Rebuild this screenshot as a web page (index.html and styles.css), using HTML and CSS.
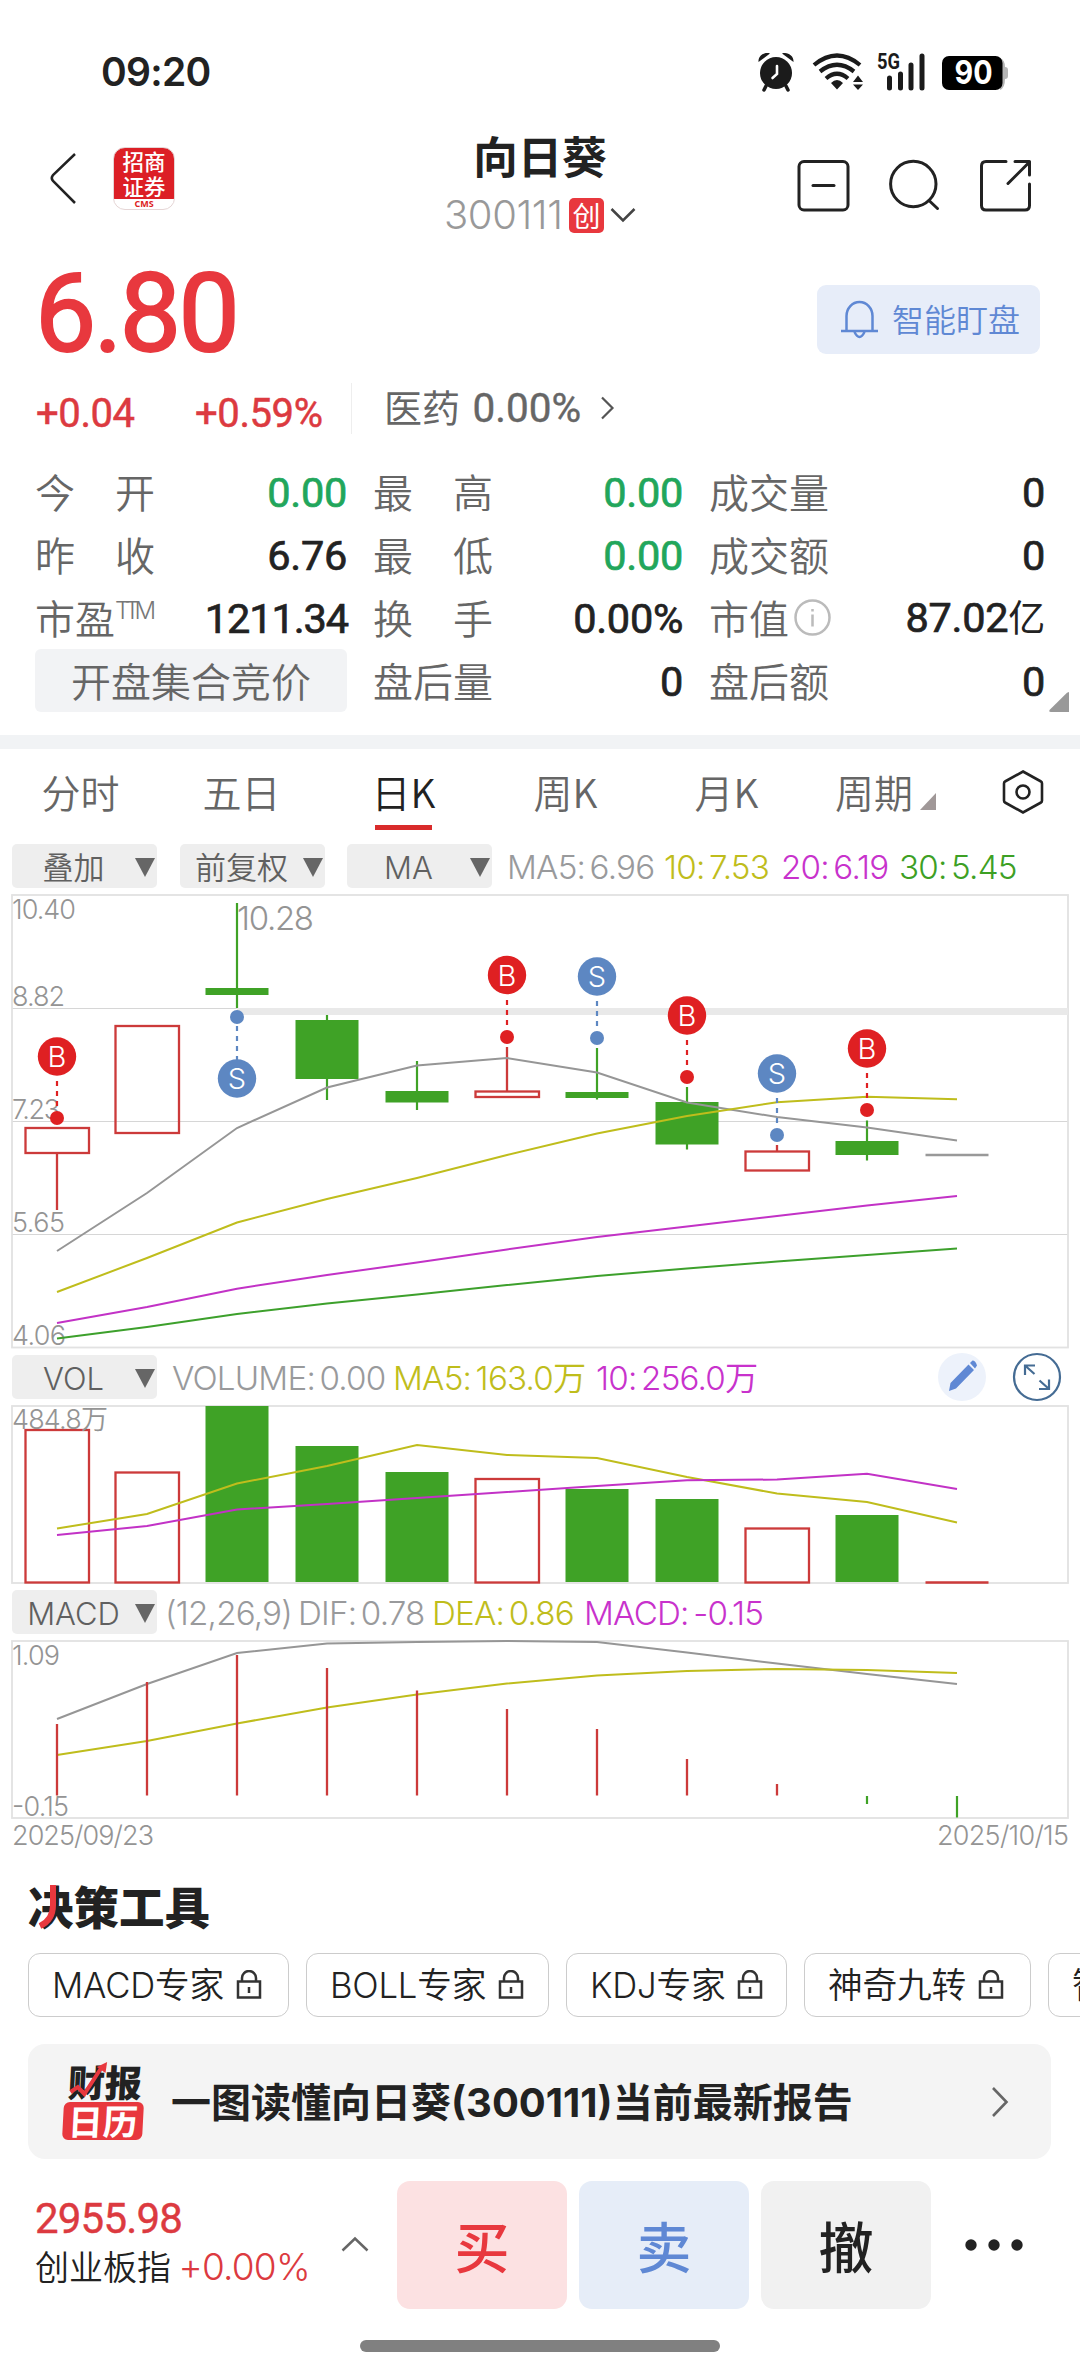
FILE: index.html
```html
<!DOCTYPE html>
<html lang="zh-CN">
<head>
<meta charset="utf-8">
<title>向日葵 300111</title>
<link rel="stylesheet" href="styles.css">
</head>
<body>
<div class="app">
  <div class="status">
    <span class="clock">09:20</span>
    <svg class="status-icons" width="256" height="46" viewBox="754 50 256 46">
      <g fill="#1b1b1b" stroke="none">
        <circle cx="776" cy="73" r="16"/>
        <path d="M758.500 62 C758 56 764 51.500 770 53.500 Z M793.500 62 C794 56 788 51.500 782 53.500 Z"/>
        <path d="M766 86 l-2 4 M786 86 l2 4" stroke="#1b1b1b" stroke-width="3.500" stroke-linecap="round"/>
      </g>
      <path d="M777 66 v8 l-4.500 4" fill="none" stroke="#fff" stroke-width="2.600" stroke-linecap="round"/>
      <g fill="none" stroke="#1b1b1b" stroke-width="4.200">
        <path d="M814 65 Q837 46 860 65"/>
        <path d="M820 71.500 Q837 58 854 71.500"/>
        <path d="M826 78.500 Q837 69 848 78.500"/>
      </g>
      <path d="M831 83 Q837 77 843 83 L837 89.500Z M853 82 l5 -6.500 5 6.500Z M853 84.500 h10 l-5 5.500Z" fill="#1b1b1b"/>
      <text class="net" x="877" y="69" textLength="23" lengthAdjust="spacingAndGlyphs">5G</text>
      <path d="M889.500 78 v10 M900.500 74 v14 M911 65 v23 M922 56 v32" stroke="#1b1b1b" stroke-width="5" stroke-linecap="round"/>
      <path d="M1000 58 q5 2 5 9 q3 0 3 3 v6 q0 3 -3 3 q0 9 -5 11z" fill="#b5b5b5"/>
      <rect x="942" y="56" width="60.500" height="34" rx="7"/>
      <text class="battery" x="954.500" y="84" textLength="38" lengthAdjust="spacingAndGlyphs">90</text>
    </svg>
  </div>

  <header class="nav">
    <svg class="back" width="30" height="54" viewBox="48 151 30 54"><path d="M75 154 L53 175 Q50.500 178 53 181 L75 203"/></svg>
    <div class="logo"><b>招商</b><b>证券</b><i>CMS</i></div>
    <div class="title">
      <h1>向日葵</h1>
      <div class="code"><span>300111</span><em>创</em>
        <svg width="26" height="16" viewBox="0 0 26 16"><path d="M1.500 2 L13 13.500 L24.500 2"/></svg></div>
    </div>
    <svg class="actions" width="240" height="56" viewBox="795 158 240 56">
      <rect x="799" y="161.500" width="49" height="48.500" rx="5"/><path d="M813 185.500 h21"/>
      <circle cx="913.300" cy="184" r="22.700"/><path d="M929 200.500 l8.500 8"/>
      <path d="M1006 161.500 H986 q-4.500 0 -4.500 4.500 V205.500 q0 4.500 4.500 4.500 H1025 q4.500 0 4.500 -4.500 V184 M1015 161.500 H1029.500 V175 M1008 183.500 L1029 162.500"/>
    </svg>
  </header>

  <section class="quote">
    <div class="price-row">
      <div class="price">6.80</div>
      <div class="watch">
        <svg width="40" height="42" viewBox="0 0 40 42"><path d="M6.500 31.500 V17 a13 14 0 0 1 26 0 V31.500 M1 32 h37 M14.500 33 q5 10 10 0"/></svg>
        <span>智能盯盘</span>
      </div>
    </div>
    <div class="change-row">
      <span class="chg">+0.04</span><span class="pct">+0.59%</span>
      <span class="industry">医药 <b>0.00%</b></span>
      <svg width="16" height="24" viewBox="0 0 16 24"><path d="M2 1.500 L12.500 12 L2 22.500"/></svg>
    </div>
    <div class="stats">
      <div class="cell"><label class="wide">今<i></i>开</label><b class="down">0.00</b></div>
      <div class="cell"><label class="wide">最<i></i>高</label><b class="down">0.00</b></div>
      <div class="cell"><label>成交量</label><b>0</b></div>
      <div class="cell"><label class="wide">昨<i></i>收</label><b>6.76</b></div>
      <div class="cell"><label class="wide">最<i></i>低</label><b class="down">0.00</b></div>
      <div class="cell"><label>成交额</label><b>0</b></div>
      <div class="cell"><label>市盈<sup>TTM</sup></label><b class="tight">1211.34</b></div>
      <div class="cell"><label class="wide">换<i></i>手</label><b>0.00%</b></div>
      <div class="cell"><label>市值<svg class="info" width="37" height="37" viewBox="0 0 37 37"><circle cx="18.500" cy="18.500" r="17"/><path d="M18.500 15.500 v12 M18.500 10 v2.500"/></svg></label><b>87.02<span class="unit">亿</span></b></div>
      <div class="auction">开盘集合竞价</div>
      <div class="cell"><label>盘后量</label><b>0</b></div>
      <div class="cell"><label>盘后额</label><b>0</b></div>
      <svg class="corner" width="20" height="20" viewBox="0 0 20 20"><path d="M20 0 V20 H2 Q-1 20 1 17.500 L18 .7Z"/></svg>
    </div>
  </section>

  <nav class="tabs">
    <span>分时</span><span>五日</span><span class="on">日K</span><span>周K</span><span>月K</span>
    <span class="period">周期<svg width="16" height="17" viewBox="0 0 16 17"><path d="M16 0 V17 H0Z"/></svg></span>
    <svg class="hex" width="44" height="46" viewBox="0 0 44 46"><path d="M22 2.500 L40 12.500 Q41 13 41 14.500 V31.500 Q41 33 40 33.500 L22 43.500 L4 33.500 Q3 33 3 31.500 V14.500 Q3 13 4 12.500Z"/><circle cx="22" cy="23" r="6.500"/></svg>
  </nav>

  <div class="bar bar-main">
    <div class="drop"><span>叠加</span><i></i></div>
    <div class="drop"><span>前复权</span><i></i></div>
    <div class="drop"><span>MA</span><i></i></div>
    <div class="legend"><span class="g" style="width:157px">MA5: 6.96</span><span class="y" style="width:117px">10: 7.53</span><span class="m" style="width:118px">20: 6.19</span><span class="n">30: 5.45</span></div>
  </div>

  <svg class="chart" width="1080" height="465" viewBox="0 888 1080 465">
    <g class="grid"><path d="M12 1008.500H1068M12 1121.500H1068M12 1234.500H1068"/><rect x="12" y="895" width="1056" height="452.500"/></g>
    <rect x="237" y="1008" width="831" height="7" fill="#e9e9e9"/>
    <g class="axis">
      <text x="12" y="918.500" textLength="64">10.40</text><text x="12" y="1005.500" textLength="53">8.82</text>
      <text x="12" y="1118.500" textLength="48">7.23</text><text x="12" y="1231.500" textLength="53">5.65</text><text x="12" y="1344.500" textLength="54">4.06</text>
      <text class="peak" x="237" y="930" textLength="77">10.28</text>
    </g>
    <g class="up"><path d="M57 1153V1210M507 1047V1091M777 1145V1151"/>
      <rect x="25.500" y="1128" width="63.500" height="25"/><rect x="115.500" y="1026" width="63.500" height="107"/>
      <rect x="475.500" y="1091.500" width="63.500" height="5.500"/><rect x="745.500" y="1151.500" width="63.500" height="19"/></g>
    <g class="dn"><path d="M237 903V1008M327 1015V1100M417 1061V1110M597 1048V1099.500M687 1087V1149.500M867 1120.500V1160.500"/>
      <rect x="205.500" y="988" width="63" height="7"/><rect x="295.500" y="1020" width="63" height="59"/>
      <rect x="385.500" y="1091" width="63" height="11.500"/><rect x="565.500" y="1092" width="63" height="6"/>
      <rect x="655.500" y="1102" width="63" height="42.500"/><rect x="835.500" y="1141" width="63" height="14"/></g>
    <path d="M925.500 1155H988.500" stroke="#999" stroke-width="2.500"/>
    <g class="line">
      <polyline class="lg" points="57,1251 147,1193 237,1128 327,1087.500 417,1065.500 507,1058 597,1072.500 687,1102.500 777,1117 867,1127.500 957,1140.500"/>
      <polyline class="ly" points="57,1292 147,1258 237,1222.500 327,1199 417,1178 507,1155 597,1133.500 687,1116 777,1102.300 867,1096.700 957,1099.300"/>
      <polyline class="lm" points="57,1323 147,1307 237,1288.700 327,1275 417,1262.500 507,1249.500 597,1237 687,1226.500 777,1216 867,1205.500 957,1196"/>
      <polyline class="ln" points="57,1338.500 147,1327 237,1314 327,1303.500 417,1294.500 507,1285 597,1276 687,1268.500 777,1261.500 867,1255 957,1248.500"/>
    </g>
    <g class="buy">
      <path d="M57 1081V1110M507 1000V1030M687 1040V1070M867 1073V1103"/>
      <circle cx="57" cy="1056.500" r="19.200"/><circle cx="57" cy="1118" r="7"/><text x="57" y="1067">B</text>
      <circle cx="507" cy="975" r="19.200"/><circle cx="507" cy="1037" r="7"/><text x="507" y="985.500">B</text>
      <circle cx="687" cy="1015.500" r="19.200"/><circle cx="687" cy="1077" r="7"/><text x="687" y="1026">B</text>
      <circle cx="867" cy="1048.500" r="19.200"/><circle cx="867" cy="1110" r="7"/><text x="867" y="1059">B</text>
    </g>
    <g class="sell">
      <path d="M237 1026V1060M597 1001V1031M777 1098V1128"/>
      <circle cx="237" cy="1078.500" r="19.200"/><circle cx="237" cy="1017" r="7"/><text x="237" y="1089">S</text>
      <circle cx="597" cy="976.500" r="19.200"/><circle cx="597" cy="1038" r="7"/><text x="597" y="987">S</text>
      <circle cx="777" cy="1073.500" r="19.200"/><circle cx="777" cy="1135" r="7"/><text x="777" y="1084">S</text>
    </g>
  </svg>

  <div class="bar bar-vol">
    <div class="drop"><span>VOL</span><i></i></div>
    <div class="legend"><span class="g" style="width:221px">VOLUME: 0.00</span><span class="y" style="width:203px">MA5: 163.0万</span><span class="m">10: 256.0万</span></div>
    <svg class="tools" width="126" height="50" viewBox="936 1352 126 50">
      <circle cx="962" cy="1377" r="24" fill="#edf2fb"/>
      <path d="M949 1391 l1.500 -8 18 -18.500 5.500 5.500 -18 18.500Z M970 1363 l2.500 -2.500 q3 0 4.500 5 l-2 3Z" fill="#5f88d4"/>
      <g fill="none" stroke="#456c94" stroke-width="2.200"><circle cx="1037" cy="1377" r="23"/><path d="M1025 1375 V1365.500 H1035 M1025 1365.500 L1034.500 1374 M1039.500 1380.500 L1049 1389 M1049 1379.500 V1389 H1039"/></g>
    </svg>
  </div>

  <svg class="chart" width="1080" height="185" viewBox="0 1402 1080 185">
    <g class="grid"><rect x="12" y="1406" width="1056" height="177"/></g>
    <g class="up"><rect x="25.500" y="1430" width="63.500" height="152.500"/><rect x="115.500" y="1472.500" width="63.500" height="110"/><rect x="475.500" y="1479" width="63.500" height="103.500"/><rect x="745.500" y="1528.500" width="63.500" height="54"/><path d="M925.500 1582.500H988.500"/></g>
    <text class="axis" x="12" y="1429" textLength="96">484.8万</text>
    <g class="dn"><rect x="205.500" y="1406" width="63" height="176"/><rect x="295.500" y="1446" width="63" height="136"/><rect x="385.500" y="1472" width="63" height="110"/><rect x="565.500" y="1489" width="63" height="93"/><rect x="655.500" y="1499" width="63" height="83"/><rect x="835.500" y="1515" width="63" height="67"/></g>
    <g class="line">
      <polyline class="ly" points="57,1528.500 147,1514 237,1483.500 327,1466 417,1445 507,1455 597,1458 687,1477 777,1493.500 867,1502 957,1522.500"/>
      <polyline class="lm" points="57,1535 147,1526 237,1509.500 327,1504 417,1498 507,1492 597,1486 687,1480.300 777,1479.500 867,1473.700 957,1489"/>
    </g>
  </svg>

  <div class="bar bar-macd">
    <div class="drop"><span>MACD</span><i></i></div>
    <div class="legend"><span class="g" style="width:133px">(12,26,9)</span><span class="g" style="width:134px">DIF: 0.78</span><span class="y" style="width:152px">DEA: 0.86</span><span class="m">MACD: -0.15</span></div>
  </div>

  <svg class="chart" width="1080" height="220" viewBox="0 1637 1080 220">
    <g class="grid"><rect x="12" y="1641" width="1056" height="177"/></g>
    <g class="axis"><text x="12" y="1664.500" textLength="48">1.09</text><text x="12" y="1815.500" textLength="57">-0.15</text>
      <text x="12" y="1844.500" textLength="142">2025/09/23</text><text x="937" y="1844.500" textLength="132">2025/10/15</text></g>
    <g class="line">
      <polyline class="lg" points="57,1719 147,1684 237,1653 327,1643.500 417,1642 507,1641 597,1642 687,1652.500 777,1663.500 867,1674 957,1684"/>
      <polyline class="ly" points="57,1755 147,1741 237,1723.500 327,1707.500 417,1694.500 507,1683.500 597,1675.500 687,1671 777,1669 867,1670 957,1673"/>
    </g>
    <g class="up"><path d="M57 1724V1795.500M147 1682V1795.500M237 1655V1795.500M327 1668V1795.500M417 1690.500V1795.500M507 1709V1795.500M597 1729V1795.500M687 1759V1795.500M777 1784V1795.500"/></g>
    <g class="dn"><path d="M867 1796V1804M957 1796V1817.500"/></g>
  </svg>

  <section class="toolbox">
    <h2>决策工具<svg width="24" height="46" viewBox="0 0 24 46"><path d="M17 1 V21 Q17 36 4 42"/></svg></h2>
    <div class="chips">
      <div class="chip" style="width:261px"><span>MACD专家</span><svg class="lock" viewBox="0 0 26 30"><path d="M6 11V8a7 7 0 0 1 14 0v3M2 11.500h22v16H2zM13 17v6"/></svg></div>
      <div class="chip" style="width:243px"><span>BOLL专家</span><svg class="lock" viewBox="0 0 26 30"><path d="M6 11V8a7 7 0 0 1 14 0v3M2 11.500h22v16H2zM13 17v6"/></svg></div>
      <div class="chip" style="width:221px"><span>KDJ专家</span><svg class="lock" viewBox="0 0 26 30"><path d="M6 11V8a7 7 0 0 1 14 0v3M2 11.500h22v16H2zM13 17v6"/></svg></div>
      <div class="chip" style="width:227px"><span>神奇九转</span><svg class="lock" viewBox="0 0 26 30"><path d="M6 11V8a7 7 0 0 1 14 0v3M2 11.500h22v16H2zM13 17v6"/></svg></div>
      <div class="chip" style="width:226px"><span>智能</span></div>
    </div>
    <div class="report">
      <div class="calendar"><span>财报</span><b>日历</b><svg width="44" height="36" viewBox="0 0 44 36"><path d="M3 30 L10 25 L17 32 L33 5" fill="none" stroke="#e8383e" stroke-width="4"/><path d="M28 5 L38 0 L37 11Z" fill="#e8383e"/></svg></div>
      <strong>一图读懂向日葵(300111)当前最新报告</strong>
      <svg class="go" width="18" height="32" viewBox="0 0 18 32"><path d="M2 2 L15.500 16 L2 30"/></svg>
    </div>
  </section>

  <footer class="trade">
    <div class="index"><b>2955.98</b><div><span>创业板指</span> <em>+0.00%</em></div></div>
    <svg class="caret" width="28" height="16" viewBox="0 0 28 16"><path d="M1.500 14.500 L14 2.500 L26.500 14.500"/></svg>
    <div class="btn buy-btn">买</div><div class="btn sell-btn">卖</div><div class="btn">撤</div>
    <svg class="more" width="60" height="14" viewBox="0 0 60 14"><circle cx="7" cy="7" r="5.700"/><circle cx="30" cy="7" r="5.700"/><circle cx="53" cy="7" r="5.700"/></svg>
  </footer>
  <div class="home"></div>
</div>
</body>
</html>
```

FILE: styles.css
```css
* { box-sizing: border-box; }
body { margin: 0; background: #fff; color: #222; font-family: Roboto, "Noto Sans CJK SC", sans-serif; }
.app { width: 1080px; height: 2373px; overflow: hidden; display: flex; flex-direction: column; }
.app > * { flex: none; }
svg { display: block; flex: none; }
b, em, i, h1, h2 { font-weight: inherit; font-style: normal; margin: 0; }

.status { height: 125px; padding: 48px 70px 0 101px; display: flex; justify-content: space-between; }
.clock { font: 600 39px/48px Inter, sans-serif; letter-spacing: -.7px; }
.status-icons { margin-top: 2px; }
.net { font: 700 22px Roboto, sans-serif; fill: #1b1b1b; }
.battery { font: 700 33px Inter, sans-serif; fill: #fff; }

.nav { height: 110px; padding: 0 45px 0 48px; display: flex; }
.back { margin-top: 26px; fill: none; stroke: #222; stroke-width: 2.5; }
.logo { width: 62px; height: 63px; margin: 22px 0 0 35px; border-radius: 12px; border: 1px solid #e5d5d5; overflow: hidden; background: linear-gradient(#dc1f26 51px, #fff 51px); text-align: center; color: #fff; padding-top: 1px; }
.logo b { display: block; height: 24.5px; font: 500 21.5px/24px "Noto Sans CJK SC", sans-serif; }
.logo i { display: block; font: 700 9px/11px "Open Sans", sans-serif; color: #d22; }
.title { width: 220px; margin-left: 255px; text-align: center; }
.title h1 { font: 700 44.5px/66px "Noto Sans CJK SC", sans-serif; color: #222; margin-top: -3px; }
.code { display: flex; align-items: center; height: 48px; margin: 3px 0 0 14px; }
.code span { font: 300 40px/48px Inter, sans-serif; color: #999; letter-spacing: -.4px; width: 125px; text-align: left; white-space: nowrap; }
.code em { width: 35px; height: 35px; border-radius: 5px; background: #e8383e; color: #fff; font: 400 28px/34px "Noto Sans CJK SC", sans-serif; }
.code svg { margin-left: 6px; fill: none; stroke: #444; stroke-width: 2.5; }
.actions { margin: 33px 0 0 auto; fill: none; stroke: #222; stroke-width: 3; stroke-linecap: round; stroke-linejoin: round; }

.quote { height: 500px; padding: 0 0 0 35px; }
.price-row { display: flex; justify-content: space-between; height: 135px; padding-right: 40px; }
.price { font: 400 109px/158px Roboto, sans-serif; letter-spacing: -2.6px; color: #e8383e; -webkit-text-stroke: 2px #e8383e; }
.watch { margin-top: 50px; width: 223px; height: 69px; border-radius: 9px; background: #e7edf9; color: #5f88d4; display: flex; align-items: center; padding-left: 23px; font: 350 32px/66px "Noto Sans CJK SC", sans-serif; }
.watch span { margin-top: -4px; }
.watch svg { margin: 0 12px 0 0; fill: none; stroke: #5f88d4; stroke-width: 2.5; }
.change-row { height: 90px; display: flex; align-items: center; color: #dc3a40; font: 400 40px/60px Roboto, sans-serif; }
.change-row .chg, .change-row .pct { margin-top: -2px; -webkit-text-stroke: .5px #dc3a40; }
.change-row .chg { width: 160px; letter-spacing: -.4px; padding-left: 1px; }
.change-row .pct { width: 156px; letter-spacing: -.4px; }
.industry { height: 51px; line-height: 51px; margin-top: -13px; border-left: 1px solid #eee; padding-left: 32px; color: #666; font-family: Roboto, "Noto Sans CJK SC", sans-serif; font-size: 38px; width: 249px; white-space: nowrap; }
.industry b { font-size: 40.5px; margin-left: 3px; -webkit-text-stroke: .4px #666; }
.change-row svg { margin-top: -15px; fill: none; stroke: #555; stroke-width: 2.2; }
.stats { position: relative; display: grid; grid-template-columns: 312px 310px 336px; column-gap: 26px; grid-auto-rows: 63px; }
.cell { display: flex; justify-content: space-between; align-items: center; white-space: nowrap; line-height: 63px; }
.cell label { font-size: 40px; font-family: "Noto Sans CJK SC", sans-serif; font-weight: 350; color: #666; display: flex; align-items: center; }
.cell label i { width: 40px; }
.cell sup { font: 300 24px/24px Inter, sans-serif; letter-spacing: -5.5px; color: #777; margin: 0 0 14px 0; }
.cell b { font-weight: 400; font-size: 41.5px; letter-spacing: -.3px; padding-top: 2px; -webkit-text-stroke: .7px currentColor; }
.cell .tight { letter-spacing: -1.1px; margin-right: -1px; }
.unit { font-size: 37px; -webkit-text-stroke: 0; }
.down { color: #22a65b; }
.info { margin-left: 5px; fill: none; stroke: #bbb; stroke-width: 2.5; }
.auction { height: 63px; border-radius: 6px; background: #f2f3f5; color: #666; text-align: center; font: 350 40px/62px "Noto Sans CJK SC", sans-serif; }
.corner { position: absolute; right: 11px; bottom: 0; fill: #999; }

.tabs { height: 109px; border-top: 14px solid #f1f3f5; display: grid; grid-template-columns: 161px 161px 163px 161px 161px 134px 1fr; padding: 12px 0 0; color: #666; font: 350 39px/60px "Noto Sans CJK SC", sans-serif; text-align: center; }
.tabs .on { color: #222; }
.tabs .on::after { content: ""; display: block; width: 57px; height: 5px; margin: 4px auto 0; background: #d92b2b; }
.tabs .period { display: flex; padding-left: 28px; white-space: nowrap; }
.tabs .period svg { margin: 32px 0 0 7px; fill: #a09898; }
.hex { margin: 8px 0 0 60px; fill: none; stroke: #222; stroke-width: 2.6; }

.bar { height: 44px; padding-left: 12px; display: flex; }
.bar-vol { margin-top: 2px; margin-bottom: 3px; }
.bar-macd { margin-top: 3px; margin-bottom: 3px; }
.drop { width: 145px; height: 44px; background: #eee; border-radius: 5px; display: flex; margin-right: 23px; color: #606060; font: 350 31px/47px Inter, "Noto Sans CJK SC", sans-serif; }
.bar-main .drop + .drop + .drop { margin-left: -1px; }
.drop span { width: 123px; text-align: center; }
.drop i { border: 10px solid transparent; border-top: 19px solid #666; border-bottom: 0; height: 0; margin-top: 14px; }
.legend { display: flex; font: 350 33.2px/47px Inter, "Noto Sans CJK SC", sans-serif; white-space: nowrap; letter-spacing: -.8px; word-spacing: -4px; margin-left: -8px; }
.bar-vol .legend { margin-left: -8px; }
.bar-macd .legend { margin-left: -15px; }
.g { color: #999a9c; } .y { color: #bfbd1c; } .m { color: #c832cc; } .n { color: #3da024; }
.tools { margin: -3px 18px 0 auto; }

.chart { overflow: hidden; }
.grid { fill: none; stroke: #e2e2e2; stroke-width: 1.8; }
.grid path { stroke: #d6d6d6; stroke-width: 1.2; }
.axis { font: 350 27px Inter, "Noto Sans CJK SC", sans-serif; fill: #949494; }
.peak { font-size: 33px; }
.up { fill: none; stroke: #cc3a3a; stroke-width: 2.3; }
.dn rect { fill: #3fa226; }
.dn path { stroke: #3fa226; stroke-width: 2.2; }
.line { fill: none; stroke-width: 2; }
.lg { stroke: #969696; } .ly { stroke: #bfbd1c; } .lm { stroke: #c232c6; } .ln { stroke: #3da02c; }
.buy circle { fill: #df2022; } .sell circle { fill: #5d87c2; }
.buy path, .sell path { stroke: #df2022; stroke-width: 2.2; stroke-dasharray: 5 5; }
.sell path { stroke: #5d87c2; }
.buy text, .sell text { font: 350 29px Inter, sans-serif; fill: #fff; text-anchor: middle; }

.toolbox { height: 303px; padding: 18px 0 0 28px; overflow: hidden; }
.toolbox h2 { position: relative; font: 900 45.5px/60px "Noto Sans CJK SC", sans-serif; color: #222; }
.toolbox h2 svg { position: absolute; left: 8px; top: 9px; fill: none; stroke: #e8383e; stroke-width: 6; }
.chips { display: flex; gap: 17px; width: 1300px; margin: 18px 0 27px; }
.chip { height: 64px; border: 1.5px solid #ccc; border-radius: 12px; padding-left: 23px; display: flex; align-items: center; font: 350 34.7px/60px Inter, "Noto Sans CJK SC", sans-serif; letter-spacing: -.2px; white-space: nowrap; }
.lock { width: 26px; height: 30px; margin-left: 12px; fill: none; stroke: #333; stroke-width: 2.5; }
.report { width: 1023px; height: 115px; border-radius: 17px; background: #f4f4f4; display: flex; align-items: center; padding: 0 42px 0 36px; }
.report strong { font: 700 40px/60px Inter, "Noto Sans CJK SC", sans-serif; margin: 3px 0 0 27px; white-space: nowrap; }
.go { margin-left: auto; fill: none; stroke: #666; stroke-width: 2.6; }
.calendar { position: relative; width: 80px; height: 76px; text-align: center; transform: skewX(-3deg); }
.calendar span { display: block; font: 900 37px/34px "Noto Sans CJK SC", sans-serif; }
.calendar b { display: block; height: 38px; margin-top: 4px; border-radius: 6px; background: #e8383e; color: #fff; font: 700 35px/35px "Noto Sans CJK SC", sans-serif; }
.calendar svg { position: absolute; left: 3px; top: -2px; }

.trade { height: 149px; padding: 21px 0 0 35px; display: flex; }
.index { width: 307px; padding-top: 13px; white-space: nowrap; }
.index b { display: block; font: 400 42px/50px Roboto, sans-serif; color: #dc3a40; letter-spacing: -.8px; -webkit-text-stroke: .4px #dc3a40; }
.index div { font: 350 34px/44px "Noto Sans CJK SC", sans-serif; }
.index em { font: 300 37px/44px Inter, sans-serif; color: #dc3a40; letter-spacing: -.8px; }
.caret { margin: 55px 28px 0 -1px; fill: none; stroke: #666; stroke-width: 2.5; }
.btn { width: 170px; height: 128px; margin-right: 12px; border-radius: 13px; background: #f1f1f1; text-align: center; font: 500 55px/126px "Noto Sans CJK SC", sans-serif; }
.buy-btn { background: #fce1e2; color: #e8383e; }
.sell-btn { background: #e6edf8; color: #5f88d4; }
.more { margin: 57px 0 0 21px; fill: #222; }
.home { width: 360px; height: 12px; margin: 31px auto 0; border-radius: 6px; background: #808080; }
```
